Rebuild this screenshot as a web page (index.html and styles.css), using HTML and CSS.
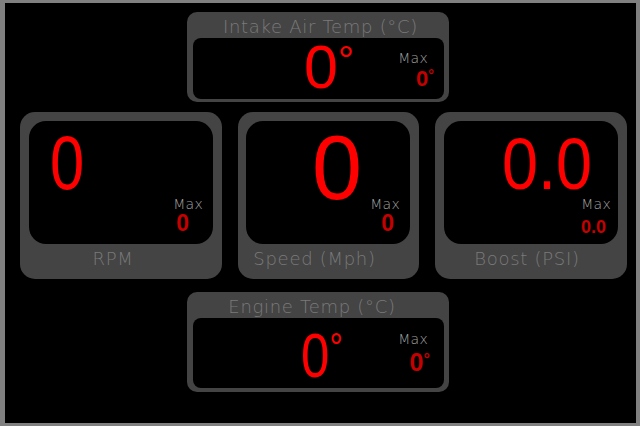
FILE: index.html
```html
<!DOCTYPE html>
<html lang="en">
<head>
<meta charset="utf-8">
<title>Gauges</title>
<link rel="stylesheet" href="styles.css">
</head>
<body>
<main class="screen">
  <section class="card card--wide card--intake">
    <h2 class="card-title">Intake Air Temp (°C)</h2>
    <div class="panel">
      <div class="reading">0<span class="deg">°</span></div>
      <div class="max">
        <span class="max-label">Max</span>
        <span class="max-value">0<span class="deg">°</span></span>
      </div>
    </div>
  </section>

  <div class="row">
    <section class="card card--tall card--rpm">
      <div class="panel">
        <div class="reading">0</div>
        <div class="max">
          <span class="max-label">Max</span>
          <span class="max-value">0</span>
        </div>
      </div>
      <h2 class="card-label">RPM</h2>
    </section>

    <section class="card card--tall card--speed">
      <div class="panel">
        <div class="reading">0</div>
        <div class="max">
          <span class="max-label">Max</span>
          <span class="max-value">0</span>
        </div>
      </div>
      <h2 class="card-label">Speed (Mph)</h2>
    </section>

    <section class="card card--tall card--boost">
      <div class="panel">
        <div class="reading">0.0</div>
        <div class="max">
          <span class="max-label">Max</span>
          <span class="max-value">0.0</span>
        </div>
      </div>
      <h2 class="card-label">Boost (PSI)</h2>
    </section>
  </div>

  <section class="card card--wide card--engine">
    <h2 class="card-title">Engine Temp (°C)</h2>
    <div class="panel">
      <div class="reading">0<span class="deg">°</span></div>
      <div class="max">
        <span class="max-label">Max</span>
        <span class="max-value">0<span class="deg">°</span></span>
      </div>
    </div>
  </section>
</main>
</body>
</html>
```
FILE: styles.css
```css
* { box-sizing: border-box; }

html, body {
  margin: 0;
  padding: 0;
  background: #000;
}

.screen {
  width: 640px;
  height: 426px;
  background: #000;
  border-style: solid;
  border-color: #808080;
  border-width: 3px 4px 3px 5px;
  padding-top: 9px;
  display: flex;
  flex-direction: column;
  align-items: flex-start;
  font-family: "DejaVu Sans", "Liberation Sans", sans-serif;
}

.row {
  display: flex;
  gap: 16px;
  margin: 10px 0 13px 15px;
}

.card {
  background: #444444;
  display: flex;
  flex-direction: column;
}

.card--wide {
  width: 262px;
  margin-left: 182px;
  border-radius: 10px;
  padding: 0 5px 3px 6px;
}

.card--intake { height: 90px; }
.card--engine { height: 100px; }

.card--tall {
  height: 167px;
  border-radius: 15px;
  padding: 9px 9px 0 9px;
}
.card--rpm { width: 202px; }
.card--speed { width: 181px; padding-left: 8px; }
.card--boost { width: 192px; }

.card-title,
.card-label {
  margin: 0;
  font-family: "DejaVu Sans", sans-serif;
  font-weight: 200;
  font-size: 18px;
  letter-spacing: 0.7px;
  color: #7a7a7a;
  text-align: center;
  white-space: nowrap;
}

.card-title {
  height: 26px;
  padding-top: 3px;
  line-height: 23px;
}
.card--intake .card-title { padding-left: 4px; }
.card--engine .card-title { padding-right: 13px; }

.card-label {
  padding-top: 1px;
  line-height: 28px;
}
.card--rpm .card-label { padding-right: 16px; }
.card--speed .card-label { padding-right: 27px; }
.card--boost .card-label { padding-right: 8px; }

.panel {
  background: #000;
  display: grid;
  grid-template-columns: 1fr;
  grid-template-rows: 1fr;
  flex: none;
}

.card--wide .panel { border-radius: 8px; }
.card--intake .panel { height: 61px; }
.card--engine .panel { height: 70px; }
.card--tall .panel { height: 123px; border-radius: 17px; }

.reading,
.max {
  grid-area: 1 / 1;
}

.reading {
  justify-self: start;
  align-self: start;
  font-family: "Liberation Sans", Arial, sans-serif;
  color: #ff0000;
  line-height: 0.8;
  white-space: nowrap;
  transform-origin: left top;
}

.deg {
  font-size: 0.65em;
  vertical-align: 0.39em;
  line-height: 0.8;
}

.card--intake .reading { font-size: 61px; margin: 5px 0 0 111px; }
.card--engine .reading { font-size: 63px; margin: 12px 0 0 108px; transform: scaleX(0.81); }
.card--rpm .reading { font-size: 76px; margin: 12px 0 0 21px; transform: scaleX(0.81); }
.card--speed .reading { font-size: 90px; margin: 11px 0 0 66px; }
.card--boost .reading { font-size: 72px; margin: 15px 0 0 58px; transform: scaleX(0.9); }

.max {
  justify-self: end;
  align-self: end;
  display: flex;
  flex-direction: column;
  align-items: flex-end;
}

.max-label {
  font-family: "DejaVu Sans", sans-serif;
  font-weight: 200;
  font-size: 14px;
  line-height: 1;
  color: #a3a3a3;
  letter-spacing: 0.3px;
}

.max-value {
  font-family: "Liberation Sans", Arial, sans-serif;
  font-weight: 700;
  color: #c40000;
  line-height: 1;
  white-space: nowrap;
}

.card--intake .max { margin: 0 10px 9px 0; }
.card--intake .max-label { margin-right: 6px; }
.card--intake .max-value { font-size: 22px; margin-top: 3px; }

.card--engine .max { margin: 0 14px 13px 0; }
.card--engine .max-label { margin-right: 2px; }
.card--engine .max-value { font-size: 25px; margin-top: 4px; }

.card--rpm .max { margin: 0 10px 9px 0; }
.card--rpm .max-value { font-size: 23px; margin: 1px 14px 0 0; }

.card--speed .max { margin: 0 10px 9px 0; }
.card--speed .max-value { font-size: 23px; margin: 1px 6px 0 0; }

.card--boost .max { margin: 0 7px 8px 0; }
.card--boost .max-value { font-size: 18px; margin: 7px 5px 0 0; }
```
